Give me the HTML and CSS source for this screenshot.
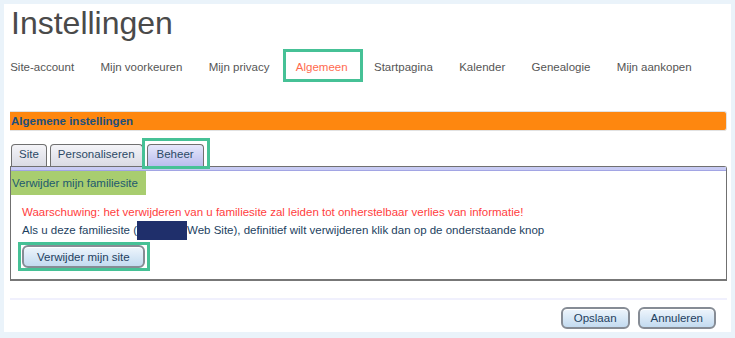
FILE: index.html
```html
<!DOCTYPE html>
<html lang="nl">
<head>
  <meta charset="UTF-8">
  <meta name="viewport" content="width=device-width, initial-scale=1.0">
  <title>Instellingen</title>
  <link rel="stylesheet" href="styles.css">
</head>
<body>
  <div class="page">
    <h1 class="title">Instellingen</h1>

    <ul class="nav">
      <li><a href="#">Site-account</a></li>
      <li><a href="#">Mijn voorkeuren</a></li>
      <li><a href="#">Mijn privacy</a></li>
      <li><a href="#" class="active marked mark-nav">Algemeen</a></li>
      <li><a href="#">Startpagina</a></li>
      <li><a href="#">Kalender</a></li>
      <li><a href="#">Genealogie</a></li>
      <li><a href="#">Mijn aankopen</a></li>
    </ul>

    <div class="section-bar">Algemene instellingen</div>

    <div class="tabs">
      <a href="#" class="tab">Site</a>
      <a href="#" class="tab">Personaliseren</a>
      <a href="#" class="tab tab-active marked mark-tab">Beheer</a>
    </div>

    <div class="tab-panel">
      <div class="panel-band"></div>
      <div class="panel-label">Verwijder mijn familiesite</div>
      <div class="panel-body">
        <p class="warning">Waarschuwing: het verwijderen van u familiesite zal leiden tot onherstelbaar verlies van informatie!</p>
        <p class="info">Als u deze familiesite (<span class="redacted"></span>Web Site), definitief wilt verwijderen klik dan op de onderstaande knop</p>
        <button class="btn marked mark-btn">Verwijder mijn site</button>
      </div>
    </div>

    <div class="separator"></div>

    <div class="actions">
      <button class="btn">Opslaan</button>
      <button class="btn">Annuleren</button>
    </div>
  </div>
</body>
</html>
```

FILE: styles.css
```css
  body {
    margin: 0;
    background: #eaf3fa;
    font-family: 'Liberation Sans', Arial, sans-serif;
    font-size: 11.5px;
    color: #1d3f5f;
  }
  .page {
    margin: 4px 4px 0 4px;
    width: 727px;
    height: 328px;
    padding: 1px 0 0 0;
    background: #fff;
    box-sizing: border-box;
    padding-left: 6px;
  }
  .title {
    margin: 0 0 0 1px;
    font-size: 32px;
    line-height: 36px;
    font-weight: normal;
    color: #4a4a4a;
  }

  /* top navigation */
  .nav {
    list-style: none;
    display: flex;
    margin: 10px 0 0 -13px;
    padding: 0;
  }
  .nav a {
    position: relative;
    display: block;
    padding: 9px 13.2px;
    line-height: 14px;
    color: #555;
    text-decoration: none;
  }
  .nav a.active {
    color: #ff6b4f;
  }

  /* green highlight marks */
  .marked {
    position: relative;
  }
  .marked::after {
    content: '';
    position: absolute;
    border: 3px solid #46c196;
    pointer-events: none;
  }
  .mark-nav::after {
    top: -2px;
    bottom: 1px;
    left: 0;
    right: -2px;
  }
  .mark-tab::after {
    top: -7px;
    bottom: -3px;
    left: -6px;
    right: -7px;
  }
  .mark-btn::after {
    top: -5px;
    bottom: -5px;
    left: -6px;
    right: -7px;
  }

  .section-bar {
    margin-top: 28px;
    width: 717px;
    box-sizing: border-box;
    height: 20px;
    line-height: 18px;
    padding-left: 1px;
    background: #fe870f;
    border: 1px solid #e2e2e2;
    border-left: none;
    border-radius: 0 3px 3px 0;
    font-weight: bold;
    color: #1b4f7d;
  }

  /* tabs */
  .tabs {
    display: flex;
    align-items: flex-end;
    gap: 3px;
    margin: 13px 0 0 1px;
  }
  .tab {
    display: block;
    padding: 0 7px 3px 7px;
    line-height: 18px;
    border: 1px solid #707070;
    border-bottom: none;
    border-radius: 4px 4px 0 0;
    background: linear-gradient(#f4f4f8, #dadbe4);
    color: #2c4a66;
    text-decoration: none;
  }
  .tab-active {
    margin-left: 1px;
    padding: 0 9px 3px 9px;
    background: linear-gradient(#e6e7fb, #babdee);
  }

  .tab-panel {
    width: 717px;
    box-sizing: border-box;
    border: 1px solid #707070;
    border-bottom: 2px solid #777;
    border-radius: 0 3px 0 0;
  }
  .panel-band {
    height: 3px;
    background: #c8cbf4;
    border-bottom: 1px solid #a2a5e4;
  }
  .panel-label {
    display: inline-block;
    height: 24px;
    line-height: 24px;
    padding: 0 8px 0 1px;
    background: #a8cd6f;
    color: #1e5a6e;
  }
  .panel-body {
    padding: 8px 0 11px 11px;
  }
  .panel-body p {
    margin: 0;
    line-height: 18px;
  }
  .warning {
    color: #ff4040;
  }
  .redacted {
    display: inline-block;
    width: 50px;
    height: 19px;
    margin-bottom: -1px;
    vertical-align: top;
    background: #1f2f6b;
  }

  .btn {
    height: 23px;
    padding: 0 13px;
    font-family: inherit;
    font-size: 11.5px;
    color: #1f3f5f;
    border: 2px solid #868c95;
    border-radius: 6px;
    background: linear-gradient(#eef5fc, #c3dbf0);
    box-shadow: inset 0 1px 0 #fff;
  }
  .panel-body .btn {
    margin-top: 6px;
    display: block;
  }

  .separator {
    width: 717px;
    height: 2px;
    margin-top: 17px;
    background: #f0f0fd;
  }
  .actions {
    display: flex;
    justify-content: flex-end;
    gap: 8px;
    width: 706px;
    margin-top: 7px;
  }
  .actions .btn {
    height: 22px;
    padding: 0 11px;
  }
```
